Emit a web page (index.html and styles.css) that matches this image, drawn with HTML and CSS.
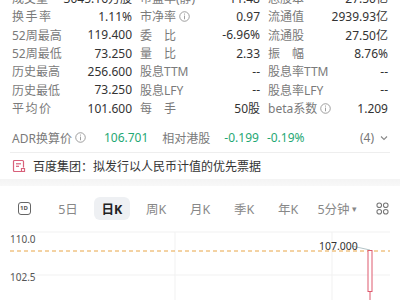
FILE: index.html
```html
<!DOCTYPE html>
<html lang="zh">
<head>
    <meta charset="UTF-8">
    <meta name="viewport" content="width=device-width, initial-scale=1.0">
    <title>百度集团 — 行情</title>
    <link rel="stylesheet" href="styles.css">
</head>
<body>
    <div class="stats">
        <div class="cell"><span class="label">成交量</span><span class="value">3045.16万股</span></div>
        <div class="cell"><span class="label">市盈率(静)</span><span class="value">11.48</span></div>
        <div class="cell"><span class="label">总股本</span><span class="value">27.50亿</span></div>

        <div class="cell"><span class="label wide">换手率</span><span class="value">1.11%</span></div>
        <div class="cell"><span class="label">市净率 <svg class="info" viewBox="0 0 12 12"><circle cx="6" cy="6" r="5.2"/><line x1="6" y1="5" x2="6" y2="9"/><circle class="dot" cx="6" cy="3.3" r="0.6"/></svg></span><span class="value">0.97</span></div>
        <div class="cell"><span class="label">流通值</span><span class="value">2939.93亿</span></div>

        <div class="cell"><span class="label">52周最高</span><span class="value">119.400</span></div>
        <div class="cell"><span class="label">委　比</span><span class="value">-6.96%</span></div>
        <div class="cell"><span class="label">流通股</span><span class="value">27.50亿</span></div>

        <div class="cell"><span class="label">52周最低</span><span class="value">73.250</span></div>
        <div class="cell"><span class="label">量　比</span><span class="value">2.33</span></div>
        <div class="cell"><span class="label">振　幅</span><span class="value">8.76%</span></div>

        <div class="cell"><span class="label">历史最高</span><span class="value">256.600</span></div>
        <div class="cell"><span class="label">股息TTM</span><span class="value">--</span></div>
        <div class="cell"><span class="label">股息率TTM</span><span class="value">--</span></div>

        <div class="cell"><span class="label">历史最低</span><span class="value">73.250</span></div>
        <div class="cell"><span class="label">股息LFY</span><span class="value">--</span></div>
        <div class="cell"><span class="label">股息率LFY</span><span class="value">--</span></div>

        <div class="cell"><span class="label wide">平均价</span><span class="value">101.600</span></div>
        <div class="cell"><span class="label">每　手</span><span class="value">50股</span></div>
        <div class="cell"><span class="label">beta系数 <svg class="info" viewBox="0 0 12 12"><circle cx="6" cy="6" r="5.2"/><line x1="6" y1="5" x2="6" y2="9"/><circle class="dot" cx="6" cy="3.3" r="0.6"/></svg></span><span class="value">1.209</span></div>
    </div>

    <div class="adr">
        <span class="label">ADR换算价 <svg class="info" viewBox="0 0 12 12"><circle cx="6" cy="6" r="5.2"/><line x1="6" y1="5" x2="6" y2="9"/><circle class="dot" cx="6" cy="3.3" r="0.6"/></svg></span>
        <span class="green adr-price">106.701</span>
        <span class="label">相对港股</span>
        <span class="green">-0.199</span>
        <span class="green">-0.19%</span>
        <span class="count">(4) <svg class="chev" viewBox="0 0 8 6"><polyline points="1,1.5 4,4.5 7,1.5"/></svg></span>
    </div>

    <div class="news">
        <svg class="news-icon" viewBox="0 0 14 14">
            <path d="M9.5 12.5H2.5a1 1 0 0 1-1-1V2.5a1 1 0 0 1 1-1h8a1 1 0 0 1 1 1v6"/>
            <line x1="4" y1="4.8" x2="9" y2="4.8"/>
            <line x1="4" y1="7.3" x2="7" y2="7.3"/>
            <path d="M9.5 9.5h3v3h-3z"/>
        </svg>
        <span>百度集团：拟发行以人民币计值的优先票据</span>
    </div>

    <div class="band"></div>

    <div class="tabs">
        <div class="tab"><span class="day-icon">1D</span></div>
        <div class="tab">5日</div>
        <div class="tab"><span class="active">日K</span></div>
        <div class="tab">周K</div>
        <div class="tab">月K</div>
        <div class="tab">季K</div>
        <div class="tab">年K</div>
        <div class="tab tab-wide">5分钟<span class="caret">▾</span></div>
        <div class="tab tab-last">
            <svg class="grid-icon" viewBox="0 0 14 14">
                <rect x="1" y="1" width="5" height="5" rx="2.5"/>
                <rect x="8" y="1" width="5" height="5" rx="2.5"/>
                <rect x="1" y="8" width="5" height="5" rx="2.5"/>
                <rect x="8" y="8" width="5" height="5" rx="2.5"/>
            </svg>
        </div>
    </div>

    <svg class="chart" viewBox="0 0 400 70" width="400" height="70">
        <line class="grid" x1="10" y1="2" x2="390" y2="2"/>
        <line class="grid" x1="10" y1="45" x2="390" y2="45"/>
        <line class="grid" x1="175" y1="2" x2="175" y2="70"/>
        <line class="grid" x1="332" y1="2" x2="332" y2="70"/>
        <text class="axis" x="10" y="13">110.0</text>
        <text class="axis" x="10" y="51">102.5</text>
        <line class="base" x1="10" y1="21" x2="390" y2="21"/>
        <line class="link" x1="352" y1="16" x2="370" y2="20"/>
        <text class="mark" x="319" y="20">107.000</text>
        <line class="wick" x1="370" y1="61" x2="370" y2="70"/>
        <rect class="candle" x="368" y="20.5" width="4" height="41"/>
    </svg>
</body>
</html>
```

FILE: styles.css
```css
body {
    margin: 0;
    background: #fff;
    color: #333;
    font-family: "Noto Sans", "Noto Sans CJK SC", sans-serif;
    font-size: 12px;
    overflow: hidden;
}
.stats {
    display: grid;
    grid-template-columns: repeat(3, 1fr);
    grid-auto-rows: 18.33px;
    column-gap: 8px;
    padding: 0 12px;
    margin-top: -11px;
}
.cell {
    display: flex;
    justify-content: space-between;
    align-items: center;
    white-space: nowrap;
}
.label {
    color: #7a7a7a;
    display: inline-flex;
    align-items: center;
    gap: 3px;
}
.label.wide {
    letter-spacing: 1.5px;
}
.value {
    color: #333;
}
.info {
    width: 11px;
    height: 11px;
    fill: none;
    stroke: #8a8a8a;
    stroke-width: 0.9;
}
.info .dot {
    fill: #8a8a8a;
    stroke: none;
}
.adr {
    height: 36px;
    box-sizing: border-box;
    padding-top: 6px;
    margin: 0 10px;
    padding-left: 2px;
    display: flex;
    align-items: center;
    border-bottom: 1px solid #eeeeee;
}
.adr .green {
    color: #1fa874;
    margin-right: 8px;
}
.adr-price {
    margin-left: 4px;
    margin-right: 14px !important;
}
.adr .label {
    margin-right: 14px;
}
.count {
    margin-left: auto;
    margin-right: 2px;
    color: #777;
    display: inline-flex;
    align-items: center;
    gap: 6px;
}
.chev {
    width: 8px;
    height: 6px;
    fill: none;
    stroke: #888;
    stroke-width: 1.1;
}
.news {
    height: 26px;
    padding: 0 12px;
    display: flex;
    align-items: center;
    gap: 7px;
    color: #333;
}
.news-icon {
    width: 14px;
    height: 14px;
    fill: none;
    stroke: #d8607a;
    stroke-width: 1.2;
}
.band {
    height: 7px;
    background: linear-gradient(#f4f4f4, #f8f8f8);
}
.tabs {
    height: 44px;
    display: flex;
    align-items: center;
    padding-left: 2px;
    color: #888;
    font-size: 12.5px;
}
.tab {
    width: 44px;
    display: flex;
    justify-content: center;
    align-items: center;
}
.tab-wide {
    width: 54px;
}
.tab-last {
    width: 36px;
}
.active {
    background: #eef0f3;
    color: #222;
    font-weight: 700;
    border-radius: 6px;
    padding: 2px 8px;
}
.day-icon {
    width: 11px;
    height: 11px;
    border: 1.2px solid #666;
    border-radius: 3px;
    font-size: 6px;
    font-weight: 700;
    color: #555;
    display: flex;
    justify-content: center;
    align-items: center;
}
.caret {
    font-size: 9px;
    margin-left: 2px;
}
.grid-icon {
    width: 13px;
    height: 13px;
    fill: none;
    stroke: #777;
    stroke-width: 1.1;
}
.chart {
    display: block;
}
.chart .grid {
    stroke: #f1f1f1;
    stroke-width: 1;
}
.chart .axis {
    font-size: 10px;
    fill: #555;
}
.chart .base {
    stroke: #e8a546;
    stroke-width: 1;
    stroke-dasharray: 4 3;
}
.chart .link {
    stroke: #9fb4b8;
    stroke-width: 0.8;
}
.chart .mark {
    font-size: 10.5px;
    fill: #333;
}
.chart .candle {
    fill: #fff;
    stroke: #de5a6e;
    stroke-width: 1;
}
.chart .wick {
    stroke: #de5a6e;
    stroke-width: 1;
}
```
